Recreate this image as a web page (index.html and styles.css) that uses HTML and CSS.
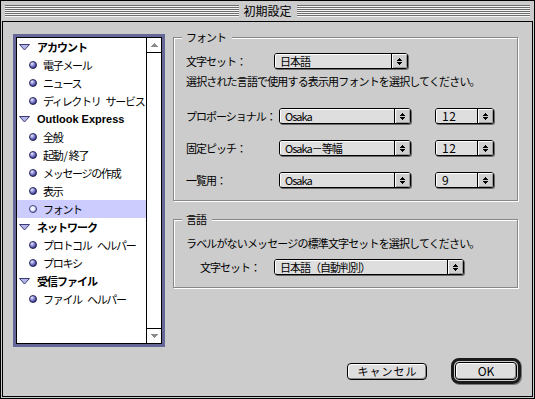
FILE: index.html
```html
<!DOCTYPE html>
<html lang="ja">
<head>
<meta charset="utf-8">
<title>初期設定</title>
<link rel="stylesheet" href="styles.css">
</head>
<body>
<svg class="defs" width="0" height="0" aria-hidden="true">
  <defs>
    <radialGradient id="ball" cx="35%" cy="32%" r="70%">
      <stop offset="0" stop-color="#f0f0ff"/>
      <stop offset="0.45" stop-color="#8c8cd8"/>
      <stop offset="1" stop-color="#2c2c78"/>
    </radialGradient>
    <radialGradient id="ballsel" cx="40%" cy="38%" r="70%">
      <stop offset="0" stop-color="#ffffff"/>
      <stop offset="0.5" stop-color="#e8e8ff"/>
      <stop offset="1" stop-color="#7070b8"/>
    </radialGradient>
  </defs>
</svg>
<div class="window">
  <div class="titlebar">
    <div class="stripes"></div>
    <div class="title">初期設定</div>
    <div class="stripes"></div>
  </div>
  <div class="content">
    <div class="listframe">
      <div class="list">
        <div class="rows">
          <div class="row head"><svg class="tri" width="11" height="7" viewBox="0 0 11 7"><path d="M0.5 0.5H10.5L5.5 6z" fill="#b4b4e4" stroke="#3a3a7a"/></svg><span>アカウント</span></div>
          <div class="row item"><svg class="bul" width="8" height="8" viewBox="0 0 8 8"><circle cx="4" cy="4" r="3.5" fill="url(#ball)" stroke="#202050" stroke-width="0.9"/></svg><span>電子メール</span></div>
          <div class="row item"><svg class="bul" width="8" height="8" viewBox="0 0 8 8"><circle cx="4" cy="4" r="3.5" fill="url(#ball)" stroke="#202050" stroke-width="0.9"/></svg><span>ニュース</span></div>
          <div class="row item"><svg class="bul" width="8" height="8" viewBox="0 0 8 8"><circle cx="4" cy="4" r="3.5" fill="url(#ball)" stroke="#202050" stroke-width="0.9"/></svg><span>ディレクトリ サービス</span></div>
          <div class="row head"><svg class="tri" width="11" height="7" viewBox="0 0 11 7"><path d="M0.5 0.5H10.5L5.5 6z" fill="#b4b4e4" stroke="#3a3a7a"/></svg><span class="latin">Outlook Express</span></div>
          <div class="row item"><svg class="bul" width="8" height="8" viewBox="0 0 8 8"><circle cx="4" cy="4" r="3.5" fill="url(#ball)" stroke="#202050" stroke-width="0.9"/></svg><span>全般</span></div>
          <div class="row item"><svg class="bul" width="8" height="8" viewBox="0 0 8 8"><circle cx="4" cy="4" r="3.5" fill="url(#ball)" stroke="#202050" stroke-width="0.9"/></svg><span>起動<span class="slash">/</span>終了</span></div>
          <div class="row item"><svg class="bul" width="8" height="8" viewBox="0 0 8 8"><circle cx="4" cy="4" r="3.5" fill="url(#ball)" stroke="#202050" stroke-width="0.9"/></svg><span>メッセージの作成</span></div>
          <div class="row item"><svg class="bul" width="8" height="8" viewBox="0 0 8 8"><circle cx="4" cy="4" r="3.5" fill="url(#ball)" stroke="#202050" stroke-width="0.9"/></svg><span>表示</span></div>
          <div class="row item selected"><svg class="bul" width="8" height="8" viewBox="0 0 8 8"><circle cx="4" cy="4" r="3.5" fill="url(#ballsel)" stroke="#303070" stroke-width="0.9"/></svg><span>フォント</span></div>
          <div class="row head"><svg class="tri" width="11" height="7" viewBox="0 0 11 7"><path d="M0.5 0.5H10.5L5.5 6z" fill="#b4b4e4" stroke="#3a3a7a"/></svg><span>ネットワーク</span></div>
          <div class="row item"><svg class="bul" width="8" height="8" viewBox="0 0 8 8"><circle cx="4" cy="4" r="3.5" fill="url(#ball)" stroke="#202050" stroke-width="0.9"/></svg><span>プロトコル ヘルパー</span></div>
          <div class="row item"><svg class="bul" width="8" height="8" viewBox="0 0 8 8"><circle cx="4" cy="4" r="3.5" fill="url(#ball)" stroke="#202050" stroke-width="0.9"/></svg><span>プロキシ</span></div>
          <div class="row head"><svg class="tri" width="11" height="7" viewBox="0 0 11 7"><path d="M0.5 0.5H10.5L5.5 6z" fill="#b4b4e4" stroke="#3a3a7a"/></svg><span>受信ファイル</span></div>
          <div class="row item"><svg class="bul" width="8" height="8" viewBox="0 0 8 8"><circle cx="4" cy="4" r="3.5" fill="url(#ball)" stroke="#202050" stroke-width="0.9"/></svg><span>ファイル ヘルパー</span></div>
        </div>
        <div class="scrollbar">
          <div class="sb-btn up"><svg width="7" height="4" viewBox="0 0 7 4"><path d="M3 0h1v1h-1z M2 1h3v1h-3z M1 2h5v1h-5z M0 3h7v1h-7z" fill="#8c8c8c"/></svg></div>
          <div class="sb-track"></div>
          <div class="sb-btn down"><svg width="7" height="4" viewBox="0 0 7 4"><path d="M0 0h7v1h-7z M1 1h5v1h-5z M2 2h3v1h-3z M3 3h1v1h-1z" fill="#8c8c8c"/></svg></div>
        </div>
      </div>
    </div>
    <div class="right">
      <div class="group g1">
        <div class="gtitle">フォント</div>
        <div class="frow first">
          <div class="label w88">文字セット：</div>
          <div class="popup w134"><div class="val">日本語</div><div class="arr"><svg width="5" height="7" viewBox="0 0 5 7"><path d="M2 0h1v1h-1z M1 1h3v1h-3z M0 2h5v1h-5z M0 4h5v1h-5z M1 5h3v1h-3z M2 6h1v1h-1z"/></svg></div></div>
        </div>
        <div class="desc d1">選択された言語で使用する表示用フォントを選択してください。</div>
        <div class="fontrows">
          <div class="frow">
            <div class="label w93">プロポーショナル：</div>
            <div class="popup w132"><div class="val">Osaka</div><div class="arr"><svg width="5" height="7" viewBox="0 0 5 7"><path d="M2 0h1v1h-1z M1 1h3v1h-3z M0 2h5v1h-5z M0 4h5v1h-5z M1 5h3v1h-3z M2 6h1v1h-1z"/></svg></div></div>
            <div class="popup w59 size"><div class="val num">12</div><div class="arr"><svg width="5" height="7" viewBox="0 0 5 7"><path d="M2 0h1v1h-1z M1 1h3v1h-3z M0 2h5v1h-5z M0 4h5v1h-5z M1 5h3v1h-3z M2 6h1v1h-1z"/></svg></div></div>
          </div>
          <div class="frow">
            <div class="label w93">固定ピッチ：</div>
            <div class="popup w132"><div class="val">Osaka－等幅</div><div class="arr"><svg width="5" height="7" viewBox="0 0 5 7"><path d="M2 0h1v1h-1z M1 1h3v1h-3z M0 2h5v1h-5z M0 4h5v1h-5z M1 5h3v1h-3z M2 6h1v1h-1z"/></svg></div></div>
            <div class="popup w59 size"><div class="val num">12</div><div class="arr"><svg width="5" height="7" viewBox="0 0 5 7"><path d="M2 0h1v1h-1z M1 1h3v1h-3z M0 2h5v1h-5z M0 4h5v1h-5z M1 5h3v1h-3z M2 6h1v1h-1z"/></svg></div></div>
          </div>
          <div class="frow">
            <div class="label w93">一覧用：</div>
            <div class="popup w132"><div class="val">Osaka</div><div class="arr"><svg width="5" height="7" viewBox="0 0 5 7"><path d="M2 0h1v1h-1z M1 1h3v1h-3z M0 2h5v1h-5z M0 4h5v1h-5z M1 5h3v1h-3z M2 6h1v1h-1z"/></svg></div></div>
            <div class="popup w59 size"><div class="val num">9</div><div class="arr"><svg width="5" height="7" viewBox="0 0 5 7"><path d="M2 0h1v1h-1z M1 1h3v1h-3z M0 2h5v1h-5z M0 4h5v1h-5z M1 5h3v1h-3z M2 6h1v1h-1z"/></svg></div></div>
          </div>
        </div>
      </div>
      <div class="group g2">
        <div class="gtitle">言語</div>
        <div class="desc d2">ラベルがないメッセージの標準文字セットを選択してください。</div>
        <div class="frow indent">
          <div class="label w74">文字セット：</div>
          <div class="popup w190"><div class="val">日本語（自動判別）</div><div class="arr"><svg width="5" height="7" viewBox="0 0 5 7"><path d="M2 0h1v1h-1z M1 1h3v1h-3z M0 2h5v1h-5z M0 4h5v1h-5z M1 5h3v1h-3z M2 6h1v1h-1z"/></svg></div></div>
        </div>
      </div>
      <div class="buttons">
        <div class="btn cancel">キャンセル</div>
        <div class="defring"><div class="btn ok">OK</div></div>
      </div>
    </div>
  </div>
</div>
</body>
</html>
```

FILE: styles.css
```css
* { box-sizing: border-box; }
html, body { margin: 0; padding: 0; }
body {
  width: 535px;
  height: 399px;
  overflow: hidden;
  background: #cccccc;
  font-family: "Noto Sans CJK JP", "Noto Sans", sans-serif;
  font-size: 11px;
  color: #000;
}
.defs { display: block; width: 0; height: 0; overflow: hidden; }

.window {
  width: 535px;
  height: 399px;
  border: 1px solid #000;
  background: #cccccc;
  padding: 0 1px 1px 1px;
  display: flex;
  flex-direction: column;
}
.titlebar {
  height: 20px;
  flex: none;
  display: flex;
  align-items: center;
  gap: 5px;
  padding: 0 3px;
}
.stripes {
  flex: 1;
  height: 12px;
  background: repeating-linear-gradient(to bottom, #6e6e6e 0 1px, #f4f4f4 1px 2px);
}
.title {
  font-size: 12px;
  line-height: 14px;
  letter-spacing: 0;
}
.content {
  flex: 1;
  border: 1px solid #000;
  background: #cccccc;
  display: flex;
  gap: 8px;
  padding: 12px 11px 12px 10px;
}

/* list */
.listframe {
  width: 152px;
  height: 313px;
  flex: none;
  border: 3px solid #666699;
}
.list {
  height: 100%;
  border: 1px solid #000;
  background: #fff;
  display: flex;
}
.rows { flex: 1; }
.row {
  height: 18px;
  display: flex;
  align-items: center;
  white-space: nowrap;
  line-height: 14px;
}
.row.head { padding-left: 2px; gap: 7px; font-weight: bold; letter-spacing: -1px; }
.row.item { padding-left: 12px; gap: 6px; letter-spacing: -1.3px; word-spacing: 4px; }
.slash { letter-spacing: 0; margin: 0 1px; }
.row.selected { background: #ccccff; }
.row svg { flex: none; }
.latin {
  font-family: "Liberation Sans", Arial, sans-serif;
  font-size: 11px;
  letter-spacing: 0;
}
.scrollbar {
  width: 15px;
  flex: none;
  border-left: 1px solid #000;
  display: flex;
  flex-direction: column;
}
.sb-btn {
  height: 15px;
  display: flex;
  align-items: center;
  justify-content: center;
}
.sb-btn.up { border-bottom: 1px solid #000; }
.sb-btn.down { border-top: 1px solid #000; }
.sb-track { flex: 1; }

/* right column */
.right {
  flex: 1;
  display: flex;
  flex-direction: column;
  padding-top: 3px;
}
.group {
  width: 345px;
  border: 1px solid #888;
  box-shadow: 1px 1px 0 #fff, inset 1px 1px 0 #fff;
  padding-left: 12px;
}
.g1 { height: 164px; }
.g2 { height: 69px; margin-top: 18px; }
.gtitle {
  width: max-content;
  height: 14px;
  line-height: 14px;
  margin: -8px 0 0 -4px;
  padding: 0 6px 0 4px;
  background: #cccccc;
  letter-spacing: -1px;
}
.frow {
  display: flex;
  align-items: center;
  height: 16px;
}
.frow.first { margin-top: 9px; }
.frow.indent { margin-top: 9px; padding-left: 14px; }
.label { flex: none; letter-spacing: -1px; white-space: nowrap; line-height: 14px; }
.w88 { width: 88px; }
.w93 { width: 93px; }
.w74 { width: 74px; }
.desc {
  line-height: 14px;
  letter-spacing: -0.85px;
  white-space: nowrap;
}
.d1 { margin-top: 5px; }
.d2 { margin-top: 10px; }
.fontrows {
  margin-top: 20px;
  display: flex;
  flex-direction: column;
  gap: 16px;
}

/* popup menus */
.popup {
  flex: none;
  display: flex;
  height: 16px;
  border: 1px solid #000;
  border-radius: 3px;
  background: #dedede;
  box-shadow: 1px 1px 0 #6a6a6a;
  overflow: hidden;
}
.w134 { width: 134px; }
.w132 { width: 132px; }
.w190 { width: 190px; }
.w59 { width: 59px; }
.popup.size { margin-left: 24px; }
.val {
  flex: 1;
  padding-left: 5px;
  line-height: 14px;
  letter-spacing: -1px;
  white-space: nowrap;
  box-shadow: inset 1px 1px 0 #fff;
}
.val.num { font-size: 12px; letter-spacing: 0.5px; padding-left: 6px; }
.arr {
  width: 16px;
  flex: none;
  border-left: 1px solid #000;
  background: #cfcfcf;
  box-shadow: inset 1px 1px 0 #fff, inset -1px -1px 0 #9a9a9a;
  display: flex;
  align-items: center;
  justify-content: center;
}

/* buttons */
.buttons {
  margin-top: auto;
  display: flex;
  align-items: center;
  justify-content: flex-end;
  gap: 24px;
}
.btn {
  border: 1px solid #000;
  border-radius: 4px;
  background: #dedede;
  box-shadow: inset 1px 1px 0 #fff, inset -1px -1px 0 #8a8a8a;
  display: flex;
  align-items: center;
  justify-content: center;
  white-space: nowrap;
}
.cancel {
  width: 80px;
  height: 17px;
  letter-spacing: 1px;
  padding-left: 1px;
  line-height: 14px;
}
.defring {
  width: 70px;
  height: 26px;
  border: 3px solid #1a1a1a;
  border-radius: 8px;
  padding: 1px;
  box-shadow: 1px 1px 0 #777;
}
.ok {
  width: 100%;
  height: 100%;
  font-size: 12px;
  line-height: 14px;
}
```
